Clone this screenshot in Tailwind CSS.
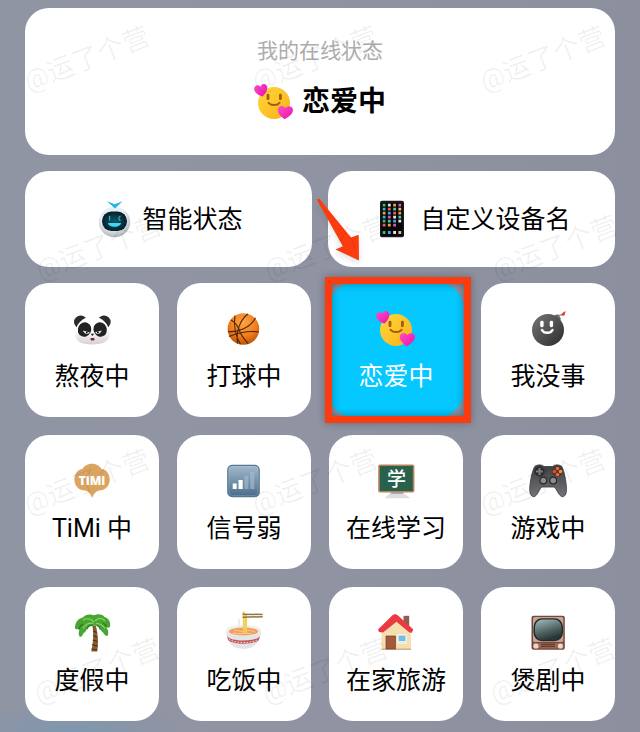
<!DOCTYPE html>
<html lang="zh-CN">
<head>
  <meta charset="UTF-8">
  <meta name="viewport" content="width=device-width, initial-scale=1.0">
  <title>我的在线状态</title>
  <script src="https://cdn.jsdelivr.net/npm/@tailwindcss/browser@4"></script>
</head>
<body class="relative min-h-screen overflow-x-hidden bg-[#9093a2] bg-[radial-gradient(ellipse_110px_30px_at_70px_100%,#7f97ad,transparent),linear-gradient(to_right,#9095a4,#9093a2,#8c8f9e)] font-[Roboto,'Noto_Sans_CJK_SC',sans-serif] text-[25px] leading-8 text-black">

  <!-- Shared shapes -->
  <svg class="absolute h-0 w-0" aria-hidden="true">
    <defs>
      <linearGradient id="yellow" x1="0" y1="0" x2="1" y2="1"><stop offset="0" stop-color="#ffd93b"/><stop offset="1" stop-color="#f9b019"/></linearGradient>
      <linearGradient id="pink" x1="0" y1="0" x2="1" y2="1"><stop offset="0" stop-color="#ff4fc8"/><stop offset="1" stop-color="#ec0fae"/></linearGradient>
      <symbol id="love" viewBox="0 0 40 36">
        <circle cx="20" cy="19" r="16" fill="url(#yellow)"/>
        <rect x="12.6" y="9.8" width="2.8" height="6.2" rx="1.2" fill="#a15c0c"/>
        <rect x="25" y="9.8" width="2.8" height="6.2" rx="1.2" fill="#a15c0c"/>
        <path d="M14.6 18.8c2.6 3 8.400 3 11 0" fill="none" stroke="#a15c0c" stroke-width="1.9" stroke-linecap="round"/>
        <path d="M8.500 12.500C4 11.500.2 8.500.2 4.800.2 1.200 4.600.2 6.300 2.700 7.500 0 10-.5 11.600.5c3.400 2.300 1.500 8-3.100 12z" fill="url(#pink)"/>
        <path d="M30.500 35.300c-4.200-3.200-7.400-6.600-6.600-10.200.8-3.500 5.800-4.200 7.400-.8 2-3.200 7-2.600 7.600 1 .7 3.800-3.600 7.400-8.400 10z" fill="url(#pink)"/>
      </symbol>
    </defs>
  </svg>

  <main class="px-[25px] py-2">
    <!-- Current status -->
    <section class="flex flex-col items-center rounded-3xl bg-white pt-[29px] pb-[33px]">
      <p class="text-[21px] leading-7 text-[#adadad]">我的在线状态</p>
      <h1 class="mt-[17px] flex items-center gap-2 text-[28px] leading-10 font-bold">
        <svg class="h-9 w-10" aria-hidden="true"><use href="#love"/></svg>
        恋爱中
      </h1>
    </section>

    <!-- Wide actions -->
    <div class="mt-4 grid grid-cols-2 gap-4">
      <button type="button" class="flex h-24 items-center justify-center gap-3 rounded-3xl bg-white pt-[2px]">
        <svg class="h-9 w-9 overflow-visible" viewBox="0 0 36 36" aria-hidden="true">
          <defs>
            <radialGradient id="shell" cx=".45" cy=".35" r=".65"><stop offset=".6" stop-color="#e9eef1"/><stop offset="1" stop-color="#a9b4bb"/></radialGradient>
            <radialGradient id="visor"><stop offset="0" stop-color="#0d5a6b"/><stop offset="1" stop-color="#06202c"/></radialGradient>
          </defs>
          <ellipse cx="20.500" cy="20" rx="15.700" ry="15.300" fill="url(#shell)"/>
          <rect x="8" y="9.500" width="25" height="19.500" rx="9.500" fill="url(#visor)"/>
          <path d="M13-.8l7.700 3L28.500-.8 21 6.600z" fill="#21b4ea"/>
          <path d="M15.600 14v4.500M26.600 14.200c-2.400.4-2.400 4 0 4.300" fill="none" stroke="#39a9bb" stroke-width="1.300"/>
          <path d="M14 21h13c-.5 5-12.500 5-13 0z" fill="#43d5fa"/>
        </svg>
        智能状态
      </button>
      <button type="button" class="flex h-24 items-center justify-center gap-3 rounded-3xl bg-white pt-[2px]">
        <svg class="h-9 w-9 overflow-visible" viewBox="0 0 36 36" aria-hidden="true">
          <rect x="8" y="-1.300" width="24" height="36.500" rx="2" fill="#181b1d"/>
          <rect x="9.500" y=".8" width="21" height="33" fill="#050708"/>
          <g stroke-width="2.800" fill="none">
            <path d="M10.700 3.200h2.800M10.700 19.200h2.800M10.700 30.500h2.800" stroke="#3bbf62"/>
            <path d="M15.900 3.200h2.800M21.200 15.200H24M21.200 30.500H24M26.400 19.200h2.800" stroke="#e4e4e4"/>
            <path d="M21.200 3.200H24M10.700 11.200h2.800M26.400 11.200h2.800M15.900 23.200h2.800" stroke="#e6a53b"/>
            <path d="M26.400 3.200h2.800M15.900 15.200h2.800M21.200 23.200H24" stroke="#d759b5"/>
            <path d="M10.700 7.200h2.800M10.700 15.200h2.800M15.900 11.200h2.800M21.200 19.200H24M15.900 30.500h2.800" stroke="#41a8e0"/>
            <path d="M15.900 7.200h2.800M21.200 11.200H24M10.700 23.200h2.800" stroke="#e75d5a"/>
            <path d="M21.200 7.200H24M26.400 15.200h2.800M15.900 19.200h2.800" stroke="#4cc3a0"/>
            <path d="M26.400 7.200h2.800M26.400 30.500h2.800" stroke="#efb878"/>
          </g>
        </svg>
        自定义设备名
      </button>
    </div>

    <!-- Status tiles -->
    <div class="mt-4 grid grid-cols-4 gap-[18px]">
      <button type="button" class="flex flex-col items-center gap-3.5 rounded-3xl bg-white pt-7 pb-6">
        <svg class="h-9 w-9 overflow-visible" viewBox="0 0 36 36" aria-hidden="true">
          <defs><linearGradient id="panda" x2="0" y2="1"><stop offset=".5" stop-color="#fff"/><stop offset="1" stop-color="#d9ccd2"/></linearGradient></defs>
          <ellipse cx="6.700" cy="11" rx="6.700" ry="6.500" fill="#2b2b2d"/>
          <ellipse cx="30" cy="11" rx="6.700" ry="6.500" fill="#2b2b2d"/>
          <path d="M18.300 5.500C29 5.500 35.500 14 35.500 23c0 7-6 10.500-17.200 10.500S1.200 30 1.200 23C1.200 14 8 5.500 18.300 5.500z" fill="url(#panda)"/>
          <ellipse cx="10.500" cy="18.500" rx="6.600" ry="7.300" transform="rotate(25 10.500 18.500)" fill="#222224"/>
          <ellipse cx="26.200" cy="18.500" rx="6.600" ry="7.300" transform="rotate(-25 26.200 18.500)" fill="#222224"/>
          <path d="M9 19.500l6.500 1.800c-1 2.500-5.500 2-6.500-1.800zM27.700 19.500l-6.500 1.800c1 2.500 5.500 2 6.500-1.800z" fill="#e8e4e4"/>
          <circle cx="12.800" cy="21.300" r=".9"/><circle cx="23.900" cy="21.300" r=".9"/>
          <path d="M16.600 22.800h3.600l-1.800 2.200z" fill="#222"/>
          <rect x="16.500" y="27" width="4" height="2.400" rx=".8" fill="#66323b"/>
        </svg>
        熬夜中
      </button>
      <button type="button" class="flex flex-col items-center gap-3.5 rounded-3xl bg-white pt-7 pb-6">
        <svg class="h-9 w-9 overflow-visible" viewBox="0 0 36 36" aria-hidden="true">
          <defs><radialGradient id="ball" cx=".5" cy=".3" r=".7"><stop offset="0" stop-color="#ffa445"/><stop offset=".6" stop-color="#f07e1c"/><stop offset="1" stop-color="#bd5208"/></radialGradient></defs>
          <circle cx="17.400" cy="18" r="15.800" fill="url(#ball)"/>
          <g fill="none" stroke="#51260c" stroke-width="1.100">
            <path d="M9 4.700C7.500 13 9 25 14.500 33.300M22 3C13.500 9 10 21 11.500 32.500"/>
            <path d="M5 9c4 2 7 6 9 12 1.500 4 5 8 8 11.500"/>
            <path d="M2 20.500c9 1 22-3 27.500-13.800M3 25.500c10-4 20-6 30-4.500"/>
          </g>
        </svg>
        打球中
      </button>
      <button type="button" aria-pressed="true" class="relative flex flex-col items-center gap-3.5 rounded-3xl bg-[#04c8ff] pt-7 pb-6 text-white">
        <svg class="h-9 w-10" aria-hidden="true"><use href="#love"/></svg>
        恋爱中
        <span class="absolute -top-[6px] -right-2 -bottom-[6px] -left-1 border-[7px] border-[#fb3c10] shadow-[0_0_8px_rgba(0,0,0,0.3),inset_0_0_9px_rgba(0,0,0,0.35)]"></span>
      </button>
      <button type="button" class="flex flex-col items-center gap-3.5 rounded-3xl bg-white pt-7 pb-6">
        <svg class="h-9 w-9 overflow-visible" viewBox="0 0 36 36" aria-hidden="true">
          <defs><linearGradient id="bomb" x1="0" y1="0" x2="1" y2="1"><stop offset="0" stop-color="#777"/><stop offset="1" stop-color="#2b2b2b"/></linearGradient></defs>
          <path d="M24 4.500l4-1.200 3 4.500-2 3z" fill="#666"/>
          <path d="M28.500 5.500c1-1.500 2-2 4-2" fill="none" stroke="#8a7a70" stroke-width="1.200"/>
          <circle cx="18" cy="19" r="16" fill="url(#bomb)"/>
          <path d="M31.500 4.500c-.3-2.500 1.500-3 4-4.500-.3 3-.3 5.600-4 4.500z" fill="#dd4636"/>
          <rect x="10.200" y="9.800" width="3.400" height="6.400" rx="1.400" fill="#fff"/>
          <rect x="19.700" y="9.800" width="3.400" height="6.400" rx="1.400" fill="#fff"/>
          <path d="M12 19c2 3.800 8.500 3.800 10.500 0" fill="none" stroke="#fff" stroke-width="2.500" stroke-linecap="round"/>
        </svg>
        我没事
      </button>

      <button type="button" class="flex flex-col items-center gap-3.5 rounded-3xl bg-white pt-7 pb-6">
        <svg class="h-9 w-9 overflow-visible" viewBox="0 0 36 36" aria-hidden="true">
          <path d="M18 .8c5 0 8 2.700 9.500 5.200 5 .5 8.200 5 8.200 10.500S32 27 26.500 27.200c-4 .3-6.500 2.800-8.300 7.800-1.800-5-4.500-7.500-8.500-7.800C4 27 .4 22 .4 16.500S3.500 6.500 8.500 6C10 3.500 13 .8 18 .8z" fill="#dba460"/>
          <text x="18" y="22" text-anchor="middle" font-family="Open Sans, sans-serif" font-size="12" font-weight="800" fill="#fff">TiMi</text>
        </svg>
        TiMi 中
      </button>
      <button type="button" class="flex flex-col items-center gap-3.5 rounded-3xl bg-white pt-7 pb-6">
        <svg class="h-9 w-9 overflow-visible" viewBox="0 0 36 36" aria-hidden="true">
          <defs><linearGradient id="signal" x2="0" y2="1"><stop offset="0" stop-color="#a2bacd"/><stop offset="1" stop-color="#486b8c"/></linearGradient></defs>
          <rect x="1.800" y="2.300" width="31.400" height="31.400" rx="4.500" fill="url(#signal)" stroke="#56758f" stroke-width="1.200"/>
          <rect x="3" y="3.500" width="29" height="29" rx="3.500" fill="none" stroke="#bed0dd" stroke-opacity=".3" stroke-width=".8"/>
          <path d="M6.700 20.500h4V26h-4zM12.500 17h4.200v9h-4.200z" fill="#fff"/>
          <path d="M18.300 13h4.200v13h-4.200zM24.200 8.700h4.200V26h-4.200z" fill="#a6bccd" fill-opacity=".65"/>
        </svg>
        信号弱
      </button>
      <button type="button" class="flex flex-col items-center gap-3.5 rounded-3xl bg-white pt-7 pb-6">
        <svg class="h-9 w-9 overflow-visible" viewBox="0 0 36 36" aria-hidden="true">
          <path d="M12 29h14v1.500l6.500 4.700h-26L12 30.500z" fill="#dcdee1"/>
          <path d="M13 29h12v2H13z" fill="#aab0b5"/>
          <rect x="1" y="2.300" width="34.600" height="26.400" rx="1" fill="#29624c" stroke="#b9825a" stroke-width="1.600"/>
          <text x="18.500" y="22.500" text-anchor="middle" font-family="'Noto Sans CJK SC', sans-serif" font-size="19" font-weight="500" fill="#fff">学</text>
        </svg>
        在线学习
      </button>
      <button type="button" class="flex flex-col items-center gap-3.5 rounded-3xl bg-white pt-7 pb-6">
        <svg class="h-9 w-9 overflow-visible" viewBox="0 0 36 36" aria-hidden="true">
          <defs><linearGradient id="pad" x2="0" y2="1"><stop offset="0" stop-color="#3c3d3f"/><stop offset="1" stop-color="#717376"/></linearGradient></defs>
          <path d="M5 3.200c3-2 7-1.600 9 .3h8.500c2-1.900 6-2.300 9-.3 2.500 3 5 16 5 23.300 0 5-2 7.200-4 7.200-3.200 0-5.400-6.700-8.200-9.700H11.700c-2.800 3-4.800 9.700-8 9.700-2 0-4-2.200-4-7.200C-.3 19.200 2.500 6.200 5 3.200z" fill="url(#pad)" stroke="#38393a" stroke-width=".8"/>
          <circle cx="9.500" cy="8.500" r="5" fill="#2c2d2f"/>
          <path d="M9.500 5v7M6 8.500h7" stroke="#7e8082" stroke-width="2"/>
          <circle cx="27.500" cy="8.500" r="5" fill="#54322b"/>
          <circle cx="27.500" cy="5.500" r="1.800" fill="#ef6b3c"/><circle cx="27.500" cy="11.500" r="1.800" fill="#ef6b3c"/>
          <circle cx="24.500" cy="8.500" r="1.800" fill="#e24e32"/><circle cx="30.500" cy="8.500" r="1.800" fill="#f29645"/>
          <g fill="#8c8d8f" stroke="#28292a" stroke-width="1.200"><circle cx="13.300" cy="17.500" r="3.400"/><circle cx="23.200" cy="17.500" r="3.400"/></g>
        </svg>
        游戏中
      </button>

      <button type="button" class="flex flex-col items-center gap-3.5 rounded-3xl bg-white pt-7 pb-6">
        <svg class="h-9 w-9 overflow-visible" viewBox="0 0 36 36" aria-hidden="true">
          <path d="M18.500 11h3.500c2 8 2.700 17 1.300 25.500h-6c2-9 2.500-17 1.200-25.500z" fill="#8a5b2f"/>
          <path d="M19.500 16l3 1.500M19 20.500l4 1.500M18.800 25l4.600 1.500M18 29.500l5.300 1.500M17.500 34l5.500 1" stroke="#4c2e15" stroke-width="1.200"/>
          <path d="M20 11c-4-1-6 0-7 2-.5 3-2 4.500-3.500 5-1 3-2 4.500-4 3.500-1.200-2.500-1-5 .3-7.500-1.500.5-3 .5-4.800-.5C.8 7.500 4 3.500 9 2.500 11-.5 16-1.500 20 .3c4-2 9-1 10.500 1.700 4 .8 6.500 5 5.500 10-1.500 1-2.500 1-4 0 2.500 3 3 6 1.500 9-1.800 0-3.300-1-4-3-1.500-1-3-3-3.500-5-1.500-2-3.700-2.500-6-2z" fill="#4aa633"/>
          <path d="M20 7c-3-3.500-7-4-11-2M21 6c3-3.500 7-3.500 10 0M19.500 8.500c-4-1-8 1-10.500 5M22 8.500c4 0 7 2 9 5" fill="none" stroke="#8bd65f" stroke-width="1.200"/>
          <path d="M19 10.500c-3-.5-5 1-6 3.500M23 10.500c1.500.5 3 2 3.500 4M9 9c-2 1-3.500 3-4 5.500M29 8c2 1 3 2.500 3.500 4" fill="none" stroke="#2c7624" stroke-width="1.300"/>
        </svg>
        度假中
      </button>
      <button type="button" class="flex flex-col items-center gap-3.5 rounded-3xl bg-white pt-7 pb-6">
        <svg class="h-9 w-9 overflow-visible" viewBox="0 0 36 36" aria-hidden="true">
          <path d="M0 15c0 10 5 19 17.500 19S35 25 35 15z" fill="#e3e4e6"/>
          <path d="M1 21c3 6 30 6 33 0l-1.200 4c-5 5-25.600 5-30.600 0z" fill="#c8555b"/>
          <path d="M3 24.500c7 4 22 4 29 0" fill="none" stroke="#f1e9ea" stroke-width="1" stroke-dasharray="1.500 1.500"/>
          <ellipse cx="17.500" cy="15.500" rx="17.500" ry="5.500" fill="#f2efeb"/>
          <ellipse cx="17.500" cy="16.500" rx="14.800" ry="4" fill="#f0a067"/>
          <path d="M8 16c4-2 7 2 12 0s7 1 9 1M7 18c6 2 12-1 19 1" fill="none" stroke="#f8cf84" stroke-width="1"/>
          <path d="M17.800-3.500v21M20 0v18" stroke="#f1cf52" stroke-width="2"/>
          <path d="M16.500-.8l20.200.3M16.500 2.200l20.200-.5" stroke="#8c7747" stroke-width="1.500"/>
          <path d="M13 11c-1-3 1-4 0-7" fill="none" stroke="#e0e0e0" stroke-width="1.200"/>
        </svg>
        吃饭中
      </button>
      <button type="button" class="flex flex-col items-center gap-3.5 rounded-3xl bg-white pt-7 pb-6">
        <svg class="h-9 w-9 overflow-visible" viewBox="0 0 36 36" aria-hidden="true">
          <path d="M25.500.8h5.700V14h-5.700z" fill="#8c6050"/>
          <path d="M3.500 15.500L17.500 4l15.500 11.500v19.300H3.500z" fill="#f5deaf"/>
          <path d="M3.500 33.500H33v1.500H3.500z" fill="#cdb184"/>
          <path d="M17-.8c1 0 2 .3 3 1.200L35.300 14.500l-1.500 3.300-2.300-.3L18.500 6.800 5 17.500l-4-.5-1-2.500L14.500.2c.8-.6 1.600-1 2.500-1z" fill="#ea3940"/>
          <path d="M8 21h9.500v13H8z" fill="#a3593c" stroke="#774027" stroke-width=".7"/>
          <rect x="20" y="20" width="8" height="8" fill="#72bce6" stroke="#fff" stroke-width="1"/>
          <path d="M20 26.800h8" stroke="#e9f5fc" stroke-width="1.500"/>
        </svg>
        在家旅游
      </button>
      <button type="button" class="flex flex-col items-center gap-3.5 rounded-3xl bg-white pt-7 pb-6">
        <svg class="h-9 w-9 overflow-visible" viewBox="0 0 36 36" aria-hidden="true">
          <defs><linearGradient id="tube" x1="0" y1="0" x2=".4" y2="1"><stop offset="0" stop-color="#a4bdbd"/><stop offset=".6" stop-color="#566969"/><stop offset="1" stop-color="#2a3636"/></linearGradient></defs>
          <rect x="1.500" y=".7" width="33.300" height="34" rx="2" fill="#74493a"/>
          <rect x="3" y="2" width="30.300" height="25" rx="1.500" fill="#c7a494"/>
          <rect x="3.500" y="3.300" width="29.500" height="23" rx="8.500" fill="#222c2d"/>
          <rect x="5" y="4.500" width="26.500" height="20.500" rx="7.500" fill="url(#tube)"/>
          <path d="M3 28h30.300v5.500H3z" fill="#9a6552"/>
          <path d="M11 29.300h14M11 31.300h14" stroke="#5b3428" stroke-width="1"/>
          <circle cx="6" cy="31" r="2.600" fill="#e7d8cd"/><circle cx="30.400" cy="31" r="2.600" fill="#e7d8cd"/>
        </svg>
        煲剧中
      </button>
    </div>
  </main>

  <!-- Pointer to the selected tile -->
  <svg class="pointer-events-none absolute top-[196px] left-[314px] h-[68px] w-[48px] overflow-visible drop-shadow-md" viewBox="0 0 48 68" aria-hidden="true">
    <path d="M3 4c.5-1.300 2-1.700 3-.6l31 38 7.700-2.600L45 64.500 21.500 53.500l7.300-3.300z" fill="#fb3c10"/>
  </svg>

  <!-- Watermark -->
  <div class="pointer-events-none absolute inset-0 overflow-hidden text-[27px] leading-8 whitespace-nowrap text-black/6 select-none" aria-hidden="true">
    <span class="absolute top-[43px] left-[21px] -rotate-21">@运了个营</span>
    <span class="absolute top-[43px] left-[249px] -rotate-21">@运了个营</span>
    <span class="absolute top-[43px] left-[477px] -rotate-21">@运了个营</span>
    <span class="absolute top-[232px] left-[33px] -rotate-21">@运了个营</span>
    <span class="absolute top-[232px] left-[261px] -rotate-21">@运了个营</span>
    <span class="absolute top-[232px] left-[489px] -rotate-21">@运了个营</span>
    <span class="absolute top-[466px] left-[21px] -rotate-21">@运了个营</span>
    <span class="absolute top-[466px] left-[249px] -rotate-21">@运了个营</span>
    <span class="absolute top-[466px] left-[477px] -rotate-21">@运了个营</span>
    <span class="absolute top-[655px] left-[31px] -rotate-21">@运了个营</span>
    <span class="absolute top-[655px] left-[259px] -rotate-21">@运了个营</span>
    <span class="absolute top-[655px] left-[487px] -rotate-21">@运了个营</span>
  </div>
</body>
</html>
